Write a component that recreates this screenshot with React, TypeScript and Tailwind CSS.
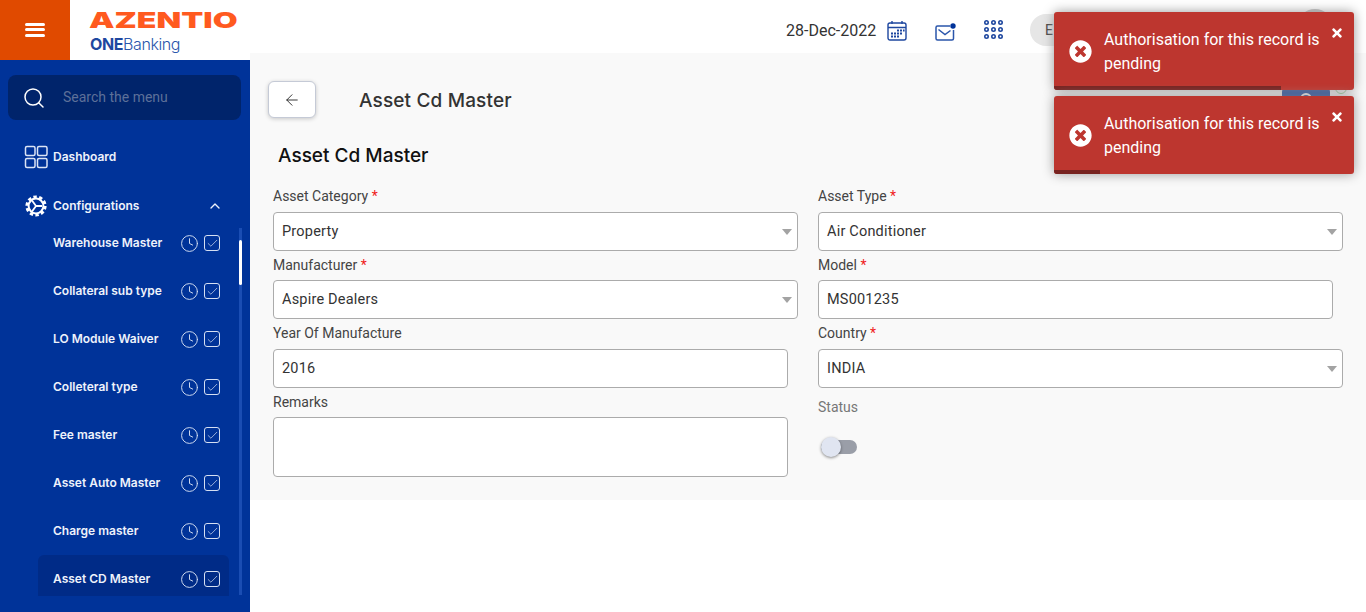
import React from 'react';
import { ArrowLeft, Check, Clock, Search, ChevronUp } from 'lucide-react';
import { FaTimes, FaTimesCircle } from 'react-icons/fa';

const menuItems = [
  'Warehouse Master',
  'Collateral sub type',
  'LO Module Waiver',
  'Colleteral type',
  'Fee master',
  'Asset Auto Master',
  'Charge master',
  'Asset CD Master',
];

function DashboardIcon() {
  return (
    <svg width="24" height="24" viewBox="0 0 24 24" fill="none" stroke="#dbe4f5" strokeWidth="1.5">
      <rect x="1.5" y="1.5" width="9.5" height="9" rx="1.5" />
      <rect x="13.5" y="1.5" width="9.5" height="9" rx="1.5" />
      <rect x="1.5" y="13.5" width="9.5" height="9" rx="1.5" />
      <rect x="13.5" y="13.5" width="9.5" height="9" rx="1.5" />
    </svg>
  );
}

function GearIcon() {
  return (
    <svg width="22" height="22" viewBox="0 0 22 22" fill="none" stroke="#ffffff">
      <circle cx="11" cy="11" r="9.2" strokeWidth="2.8" strokeDasharray="3.4 2.38" />
      <circle cx="11" cy="11" r="7.4" strokeWidth="2" />
      <path d="M11 11 L7 5.5 M11 11 L17 11 M11 11 L7 16.5" strokeWidth="1.8" />
    </svg>
  );
}

function CalendarIcon() {
  return (
    <svg width="20" height="21" viewBox="0 0 20 21" fill="none" stroke="#1e479f" strokeWidth="1.4">
      <rect x="1" y="3" width="18" height="17" rx="2" />
      <path d="M1 7.5 H19 M5 1 V4 M15 1 V4" />
      <g fill="#1e479f" stroke="none">
        <rect x="10" y="9.5" width="2" height="2" />
        <rect x="13" y="9.5" width="2" height="2" />
        <rect x="16" y="9.5" width="1.6" height="2" />
        <rect x="4" y="12.5" width="2" height="2" />
        <rect x="7" y="12.5" width="2" height="2" />
        <rect x="10" y="12.5" width="2" height="2" />
        <rect x="13" y="12.5" width="2" height="2" />
        <rect x="4" y="15.5" width="2" height="2" />
        <rect x="7" y="15.5" width="2" height="2" />
        <rect x="10" y="15.5" width="2" height="2" />
      </g>
    </svg>
  );
}

function MailIcon() {
  return (
    <svg width="21" height="18" viewBox="0 0 21 18" fill="none" stroke="#2a55ab" strokeWidth="1.5">
      <path d="M15 3 H2.5 A1.5 1.5 0 0 0 1 4.5 V15.5 A1.5 1.5 0 0 0 2.5 17 H17 A1.5 1.5 0 0 0 18.5 15.5 V7" />
      <path d="M3.5 6.5 L10 11.5 L15.5 7.5" />
      <circle cx="18" cy="3" r="2.7" fill="#003399" stroke="none" />
    </svg>
  );
}

function AppsIcon() {
  const dots = [2.5, 9.5, 16.5];
  return (
    <svg width="19" height="19" viewBox="0 0 19 19" fill="none" stroke="#1e479f" strokeWidth="1.6">
      {dots.map((y) => dots.map((x) => <circle key={`${x}-${y}`} cx={x} cy={y} r="1.7" />))}
    </svg>
  );
}

function Caret() {
  return (
    <svg width="10" height="6" viewBox="0 0 10 6" className="absolute right-[5px] top-[16px]">
      <polygon points="0,0 10,0 5,6" fill="#a3a3a3" />
    </svg>
  );
}

function Field({ label, required, value, select, narrow }: { label: string; required?: boolean; value: string; select?: boolean; narrow?: boolean }) {
  return (
    <div className="flex flex-col justify-between pb-1">
      <label className="h-5 text-sm leading-5 text-[#444]">
        {label} {required && <span className="text-[#f01c1c]">*</span>}
      </label>
      <div className={`relative flex h-[39px] items-center rounded border border-[#ababab] bg-white px-2 text-[14.5px] tracking-[0.2px] text-[#333] ${narrow ? 'mr-[10px]' : ''}`}>
        {value}
        {select && <Caret />}
      </div>
    </div>
  );
}

function Toast({ progress }: { progress: string }) {
  return (
    <div className="relative h-[78px] w-[300px] overflow-hidden rounded-[3px] bg-[#bd362f] pl-[50px] pr-6 pt-[16px] text-[16px] leading-6 text-white shadow-[0_0_12px_#999]">
      <FaTimesCircle size={23} className="absolute left-[15px] top-[28px]" />
      <FaTimes size={14} className="absolute right-[10px] top-[14px]" />
      Authorisation for this record is pending
      <div className={`absolute bottom-0 left-0 h-1 bg-[#772320] ${progress}`} />
    </div>
  );
}

export default function App() {
  return (
    <div className="relative flex h-[612px] w-[1366px] overflow-hidden bg-white font-['Roboto',sans-serif]">
      {/* left column */}
      <div className="flex w-[250px] shrink-0 flex-col">
        <div className="flex h-[60px] shrink-0">
          <div className="flex w-[70px] flex-col items-center justify-center gap-[2.5px] bg-[#e04a00] pb-[1px]">
            <span className="h-[3px] w-5 rounded-sm bg-white" />
            <span className="h-[3px] w-5 rounded-sm bg-white" />
            <span className="h-[3px] w-5 rounded-sm bg-white" />
          </div>
          <div className="pl-5 pt-[7px]">
            <div className="-ml-[1px] h-[26px] origin-left scale-x-[1.46] font-['Inter',sans-serif] text-[22px] font-black leading-[26px] text-[#ff5a1f]">
              AZENTIO
            </div>
            <div className="font-['Inter',sans-serif] text-[16px] leading-[22px] tracking-[-0.4px] text-[#2a55ab]">
              <span className="font-bold text-[#1e479f]">ONE</span>
              <span className="font-light">Banking</span>
            </div>
          </div>
        </div>

        <div className="relative flex-1 bg-[#003399] font-['Inter',sans-serif] text-[12px] font-semibold text-[#eef2fb]">
          <div className="ml-2 mr-[9px] mt-[15px] flex h-[45px] items-center rounded-lg bg-[#00246b] pl-[14px]">
            <Search size={24} strokeWidth={1.5} className="text-white" />
            <span className="mb-[1px] ml-[17px] font-['Roboto',sans-serif] text-sm font-normal text-[#5d7099]">Search the menu</span>
          </div>
          <div className="mt-[25px] flex h-6 items-center pl-[24px]">
            <DashboardIcon />
            <span className="ml-[5px]">Dashboard</span>
          </div>
          <div className="mt-[25px] flex h-6 items-center pl-[25px]">
            <GearIcon />
            <span className="ml-[6px]">Configurations</span>
            <ChevronUp size={16} strokeWidth={2} className="ml-[68px]" />
          </div>
          <div className="mt-[1px] h-[377px] overflow-hidden">
            {menuItems.map((item) => (
              <div key={item} className="flex h-12 items-start">
                <div className={`ml-[38px] flex h-[46px] w-[191px] items-center pl-[15px] pt-[1px] ${item === 'Asset CD Master' ? 'rounded-md bg-[#002b87]' : ''}`}>
                  <span className="w-[127px]">{item}</span>
                  <Clock size={19} strokeWidth={1.2} className="mt-[2px] text-[#d5dff2]" />
                  <span className="ml-[5px] mt-[1px] flex h-4 w-4 items-center justify-center rounded-[3px] border border-[#d5dff2]">
                    <Check size={13} strokeWidth={1.3} className="text-[#d5dff2]" />
                  </span>
                </div>
              </div>
            ))}
          </div>
          {/* scrollbar */}
          <div className="absolute left-[239px] top-[168px] h-[367px] w-[3px] bg-[#1a4db3]">
            <div className="mt-3 h-[45px] w-[3px] rounded-sm bg-white" />
          </div>
        </div>
      </div>

      {/* right column */}
      <div className="flex flex-1 flex-col">
        <header className="flex h-[53px] shrink-0 items-center pl-[536px] pt-[9px]">
          <span className="w-[90px] whitespace-nowrap text-[16px] text-[#333]">28-Dec-2022</span>
          <span className="mb-[2px] ml-[11px]"><CalendarIcon /></span>
          <span className="ml-[28px] mt-[1px]"><MailIcon /></span>
          <span className="mb-[4px] ml-[28px]"><AppsIcon /></span>
          <div className="mb-[2px] ml-[27px] flex h-8 w-[180px] items-center rounded-full bg-[#e6e6e6] pl-[15px] text-sm text-[#444]">E</div>
          <div className="mb-[8px] ml-[87px] h-9 w-9 rounded-full bg-[#bdbdbd]" />
        </header>

        <main className="h-[447px] bg-[#f9f9f9] pl-[18px] pt-7">
          <div className="flex items-start">
            <button className="flex h-[37px] w-12 items-center justify-center rounded-md border border-[#c5cad6] bg-white shadow-[0_1px_4px_rgba(0,0,0,0.2)]">
              <ArrowLeft size={18} strokeWidth={1.2} className="text-[#222]" />
            </button>
            <h2 className="ml-[43px] h-[37px] font-['Inter',sans-serif] text-[19px] font-medium leading-[40px] tracking-[0.15px] text-[#333]">Asset Cd Master</h2>
            <div className="ml-[770px] mt-[7px] flex h-9 w-12 justify-center rounded bg-[#003399] pt-[5px]">
              <span className="h-3 w-3 rounded-full border-2 border-white" />
            </div>
            <div className="ml-[5px] mt-[1px] h-3 w-3 rounded-full border border-[#8fd08f]" />
          </div>
          <h3 className="ml-[10px] mt-[21px] h-[22px] font-['Inter',sans-serif] text-[19px] font-medium leading-[22px] text-[#111]">Asset Cd Master</h3>
          <div className="ml-[5px] mt-[19px] grid w-[1070px] grid-cols-2 grid-rows-[69px_68px_69px_auto] gap-x-5">
            <Field label="Asset Category" required value="Property" select />
            <Field label="Asset Type" required value="Air Conditioner" select />
            <Field label="Manufacturer" required value="Aspire Dealers" select />
            <Field label="Model" required value="MS001235" narrow />
            <Field label="Year Of Manufacture" value="2016" narrow />
            <Field label="Country" required value="INDIA" select />
            <div className="flex flex-col">
              <label className="h-5 text-sm leading-5 text-[#444]">Remarks</label>
              <div className="mr-[10px] mt-[5px] h-[60px] rounded border border-[#ababab] bg-white" />
            </div>
            <div className="flex flex-col">
              <label className="mt-[5px] h-5 text-sm leading-5 text-[#777]">Status</label>
              <div className="relative ml-[3px] mt-[23px] h-[14px] w-9 rounded-full bg-[#9a9ea8]">
                <span className="absolute left-0 -top-[3px] h-5 w-5 rounded-full bg-[#e0e5f1] shadow-[0_1px_3px_rgba(0,0,0,0.45)]" />
              </div>
            </div>
          </div>
        </main>
      </div>

      {/* toasts */}
      <div className="absolute left-[1054px] top-3 flex flex-col gap-[6px]">
        <Toast progress="w-[227px]" />
        <Toast progress="w-[46px]" />
      </div>
    </div>
  );
}
